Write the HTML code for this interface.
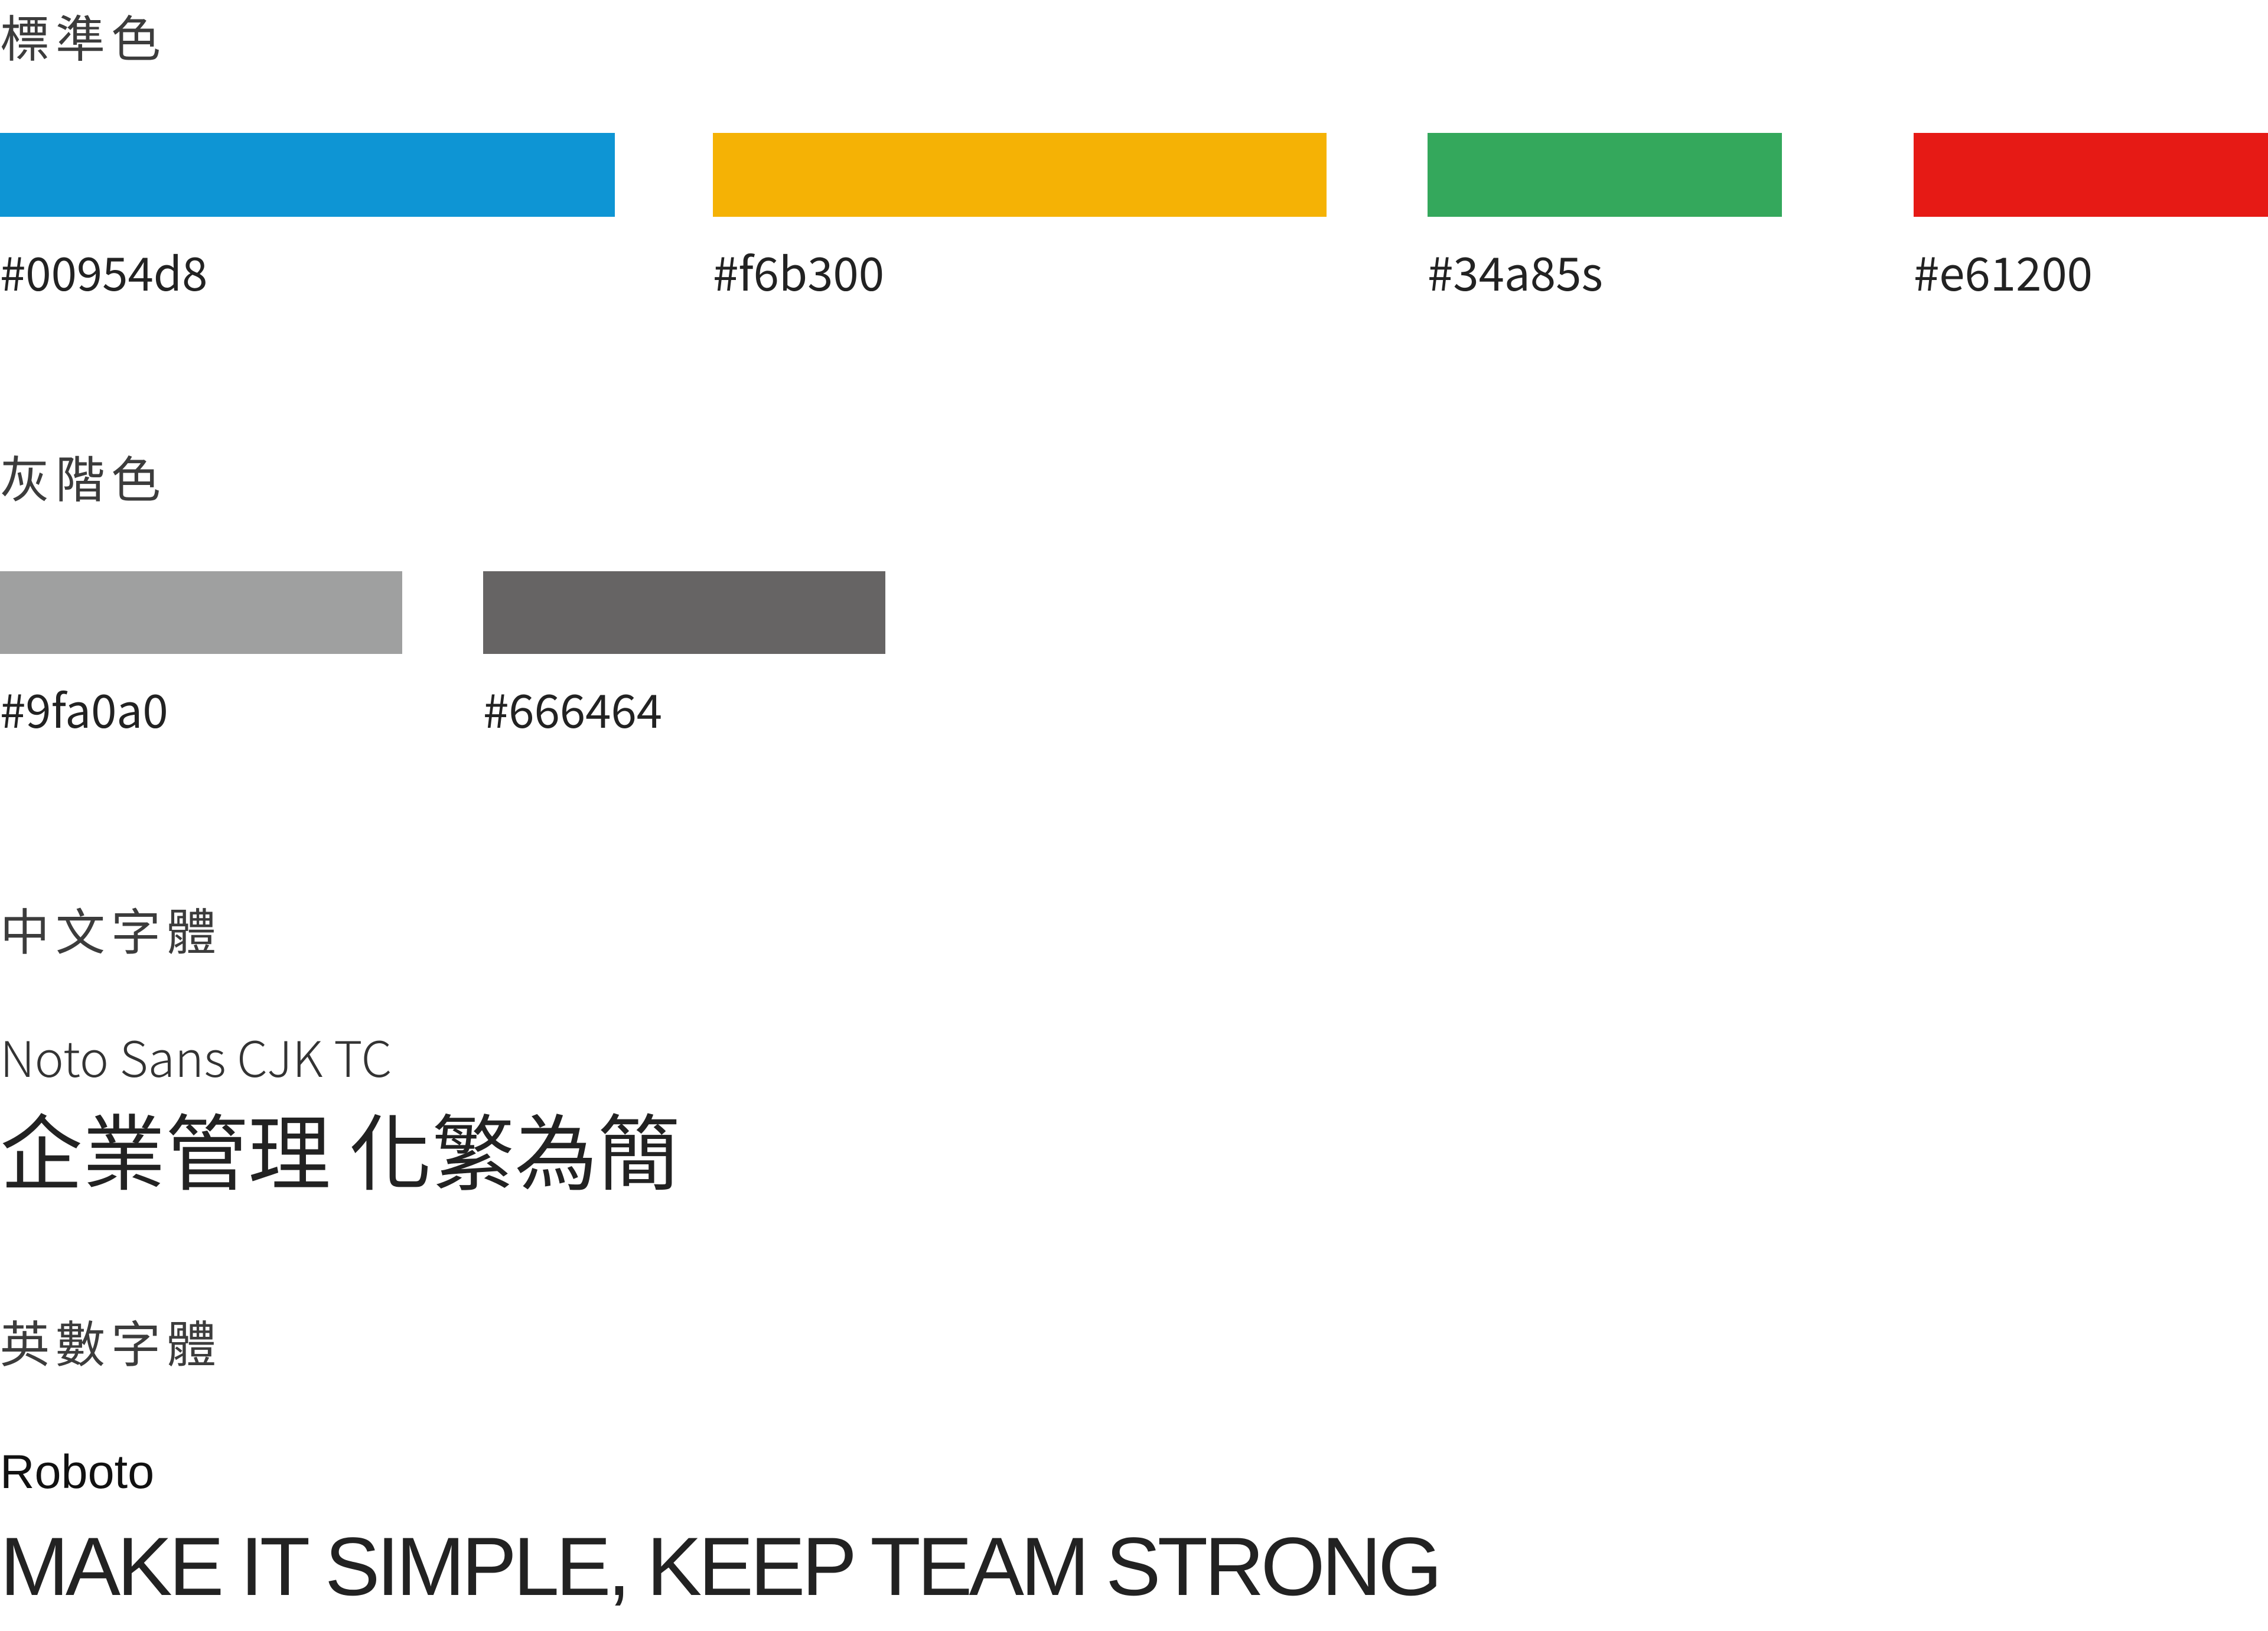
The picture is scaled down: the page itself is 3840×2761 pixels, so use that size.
<!DOCTYPE html>
<html><head><meta charset="utf-8"><style>
html,body{margin:0;padding:0;background:#fff;}
body{width:3840px;height:2761px;position:relative;overflow:hidden;}
.a{position:absolute;white-space:nowrap;line-height:1;}
.h{font-family:"Noto Sans CJK TC","Noto Sans CJK SC",sans-serif;font-size:84px;letter-spacing:10px;color:#3c3c3c;}
.x{font-family:"Noto Sans CJK TC","Liberation Sans",sans-serif;font-size:78px;color:#222;}
.b{position:absolute;}
</style></head><body>
<div class="a h" style="left:0;top:19px">標準色</div>
<div class="b" style="left:0;top:225px;width:1041px;height:142px;background:#0e95d4"></div>
<div class="b" style="left:1207px;top:225px;width:1039px;height:142px;background:#f5b205"></div>
<div class="b" style="left:2417px;top:225px;width:600px;height:142px;background:#34a85c"></div>
<div class="b" style="left:3240px;top:225px;width:600px;height:142px;background:#e61a15"></div>
<div class="a x" style="left:0;top:420px">#00954d8</div>
<div class="a x" style="left:1207px;top:420px">#f6b300</div>
<div class="a x" style="left:2417px;top:420px">#34a85s</div>
<div class="a x" style="left:3240px;top:420px">#e61200</div>

<div class="a h" style="left:0;top:765px">灰階色</div>
<div class="b" style="left:0;top:967px;width:681px;height:140px;background:#9fa0a0"></div>
<div class="b" style="left:818px;top:967px;width:681px;height:140px;background:#666464"></div>
<div class="a x" style="left:0;top:1160px">#9fa0a0</div>
<div class="a x" style="left:818px;top:1160px">#666464</div>

<div class="a h" style="left:0;top:1531px">中文字體</div>
<div class="a x" style="left:0;top:1746px;font-size:83px;font-weight:300;color:#333">Noto Sans CJK TC</div>
<div class="a" style="left:0;top:1873px;font-family:'Noto Sans CJK TC',sans-serif;font-size:140px;color:#222">企業管理 化繁為簡</div>

<div class="a h" style="left:0;top:2229px">英數字體</div>
<div class="a" style="left:0;top:2452px;font-family:'Liberation Sans',sans-serif;font-size:81px;color:#111">Roboto</div>
<div class="a" style="left:0;top:2582px;font-family:'Liberation Sans',sans-serif;font-size:140px;letter-spacing:-5.8px;color:#222">MAKE IT SIMPLE, KEEP TEAM STRONG</div>
</body></html>
